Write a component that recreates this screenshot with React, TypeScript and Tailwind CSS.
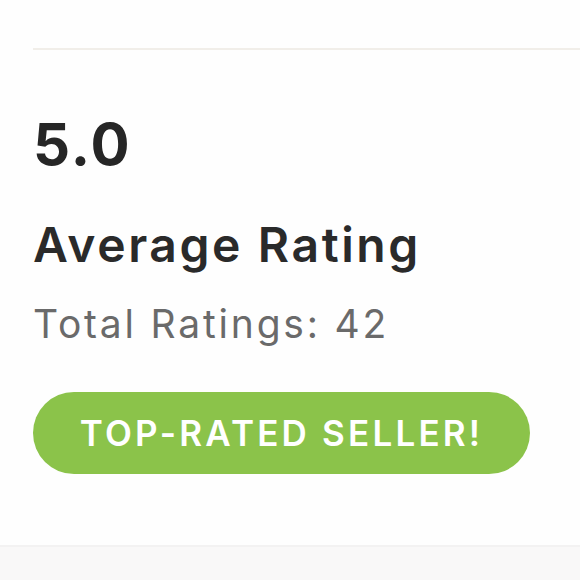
export default function App() {
  return (
    <div className="w-[580px] h-[580px] bg-[#fefefe] flex flex-col overflow-hidden font-['Inter','Liberation_Sans',sans-serif]">
      <div className="pl-[33px] pt-[48px] flex-1">
        <div className="h-[2px] bg-[#f1eee9]" />
        <div className="pt-[54px] text-[58px] leading-[80px] font-bold tracking-[2px] text-[#262626]">5.0</div>
        <div className="pt-[31px] text-[48px] leading-[60px] font-semibold tracking-[2.6px] text-[#2a2a2a]">Average Rating</div>
        <div className="pt-[24px] text-[39px] leading-[50px] tracking-[2.8px] text-[#6a6a6a]">Total Ratings: 42</div>
        <button className="mt-[43px] w-[497px] h-[82px] rounded-full bg-[#8bc34a] text-white text-[35px] font-semibold tracking-[3.2px]">
          TOP-RATED SELLER!
        </button>
      </div>
      <div className="h-[35px] bg-[#f9f8f8] border-t-2 border-[#f3f2f2]" />
    </div>
  );
}
